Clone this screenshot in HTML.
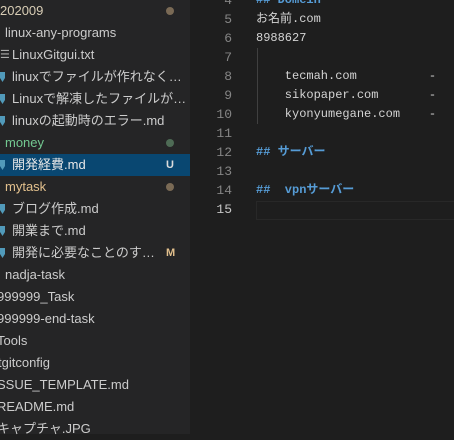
<!DOCTYPE html>
<html><head><meta charset="utf-8"><style>
body{margin:0;width:454px;height:434px;background:#1e1e1e;overflow:hidden;position:relative;font-family:"Liberation Sans","Noto Sans CJK JP",sans-serif}
#side{position:absolute;left:0;top:0;width:190px;height:434px;background:#252526}
.r{position:absolute;left:0;width:190px;height:22px;line-height:22px;font-size:13px;color:#cccccc;white-space:nowrap}
.r span.ic{position:absolute;left:0;top:6px;width:5px;height:10px;background:#519aba;clip-path:polygon(0 0,100% 0,100% 60%,50% 100%,0 60%)}
.dot{position:absolute;left:166px;top:7px;width:8px;height:8px;border-radius:50%;background:#7a6a55}
.b{position:absolute;left:166px;font-size:11px;font-weight:bold}
#ed{position:absolute;left:190px;top:0;width:264px;height:434px;font-family:"Liberation Mono","Noto Sans CJK JP",monospace;font-size:12px}
.l{position:absolute;left:0;height:19px;line-height:19px;width:264px;white-space:pre}
.n{position:absolute;right:222px;color:#858585;text-align:right;font-size:13px}
.c{position:absolute;left:66px;color:#d4d4d4}
.h{color:#569cd6;font-weight:bold}
</style></head><body>
<div id="side">
<div class="r" style="top:0;color:#d8cdb5">202009<i class="dot"></i></div>
<div class="r" style="top:22px;left:5px">linux-any-programs</div>
<div class="r" style="top:44px"><span style="position:absolute;left:0;color:#aaa;font-size:11px">☰</span><span style="position:absolute;left:12px">LinuxGitgui.txt</span></div>
<div class="r" style="top:66px"><span class="ic"></span><span style="position:absolute;left:12px">linuxでファイルが作れなく…</span></div>
<div class="r" style="top:88px"><span class="ic"></span><span style="position:absolute;left:12px">Linuxで解凍したファイルが…</span></div>
<div class="r" style="top:110px"><span class="ic"></span><span style="position:absolute;left:12px">linuxの起動時のエラー.md</span></div>
<div class="r" style="top:132px;color:#73c991"><span style="position:absolute;left:5px">money</span><i class="dot" style="background:#4e6b55"></i></div>
<div class="r" style="top:154px;background:#094771;color:#e8e8e8"><span class="ic"></span><span style="position:absolute;left:12px">開発経費.md</span><b class="b" style="color:#dcdcdc">U</b></div>
<div class="r" style="top:176px;color:#e2c08d"><span style="position:absolute;left:5px">mytask</span><i class="dot"></i></div>
<div class="r" style="top:198px"><span class="ic"></span><span style="position:absolute;left:12px">ブログ作成.md</span></div>
<div class="r" style="top:220px"><span class="ic"></span><span style="position:absolute;left:12px">開業まで.md</span></div>
<div class="r" style="top:242px"><span class="ic"></span><span style="position:absolute;left:12px">開発に必要なことのす…</span><b class="b" style="color:#e2c08d">M</b></div>
<div class="r" style="top:264px"><span style="position:absolute;left:5px">nadja-task</span></div>
<div class="r" style="top:286px;left:-3px">999999_Task</div>
<div class="r" style="top:308px;left:-3px">999999-end-task</div>
<div class="r" style="top:330px;left:-3px">Tools</div>
<div class="r" style="top:352px;left:-2px">tgitconfig</div>
<div class="r" style="top:374px;left:-3px">SSUE_TEMPLATE.md</div>
<div class="r" style="top:396px;left:-3px">README.md</div>
<div class="r" style="top:418px;left:-3px">キャプチャ.JPG</div>
</div>
<div id="ed">
<div style="position:absolute;left:67px;top:48px;width:1px;height:76px;background:#404040"></div>
<div style="position:absolute;left:66px;top:201px;width:200px;height:17px;border:1px solid #282828"></div>
<div class="l" style="top:-9px"><span class="n">4</span><span class="c h">## Domein</span></div>
<div class="l" style="top:10px"><span class="n">5</span><span class="c">お名前.com</span></div>
<div class="l" style="top:29px"><span class="n">6</span><span class="c">8988627</span></div>
<div class="l" style="top:48px"><span class="n">7</span></div>
<div class="l" style="top:67px"><span class="n">8</span><span class="c">    tecmah.com          -</span></div>
<div class="l" style="top:86px"><span class="n">9</span><span class="c">    sikopaper.com       -</span></div>
<div class="l" style="top:105px"><span class="n">10</span><span class="c">    kyonyumegane.com    -</span></div>
<div class="l" style="top:124px"><span class="n">11</span></div>
<div class="l" style="top:143px"><span class="n">12</span><span class="c h">## サーバー</span></div>
<div class="l" style="top:162px"><span class="n">13</span></div>
<div class="l" style="top:181px"><span class="n">14</span><span class="c h">##  vpnサーバー</span></div>
<div class="l" style="top:200px"><span class="n" style="color:#c6c6c6">15</span></div>
</div>
</body></html>
